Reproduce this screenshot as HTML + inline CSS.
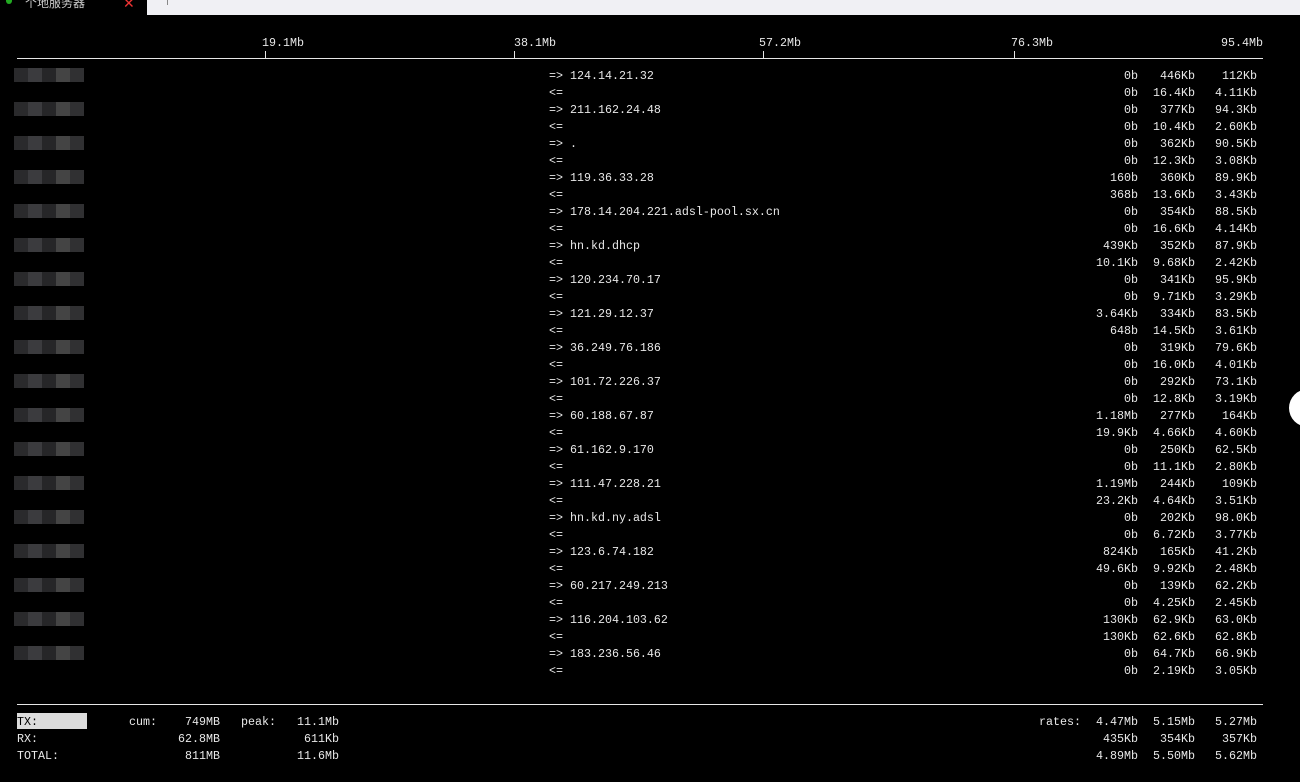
<!DOCTYPE html>
<html><head><meta charset="utf-8"><style>
*{margin:0;padding:0}
body{width:1300px;height:782px;background:#000;position:relative;overflow:hidden;font-family:"Liberation Mono",monospace;font-size:11.67px;color:#e8e8e8}
.r{position:absolute;left:0;width:1300px;height:17px;line-height:17px;white-space:pre;margin-top:1px}
.a{position:absolute;left:549px}
.c1{position:absolute;right:162px}
.c2{position:absolute;right:105px}
.c3{position:absolute;right:43px}
.tb{position:absolute;top:0;left:147px;width:1153px;height:15px;background:#f0f0f4}
.hl{position:absolute;height:1px;background:#e6e6e6}
.tk{position:absolute;width:1px;height:7px;background:#e6e6e6;top:51px}
.lb{position:absolute;top:35px;line-height:17px}
.bl{position:absolute;left:14px;width:70px;height:14px;background:linear-gradient(90deg,#2a2a2c 0 20%,#3b3b3e 20% 40%,#262628 40% 60%,#444 60% 80%,#303032 80%)}
</style></head><body>
<div class="tb"></div>
<div style="position:absolute;left:6px;top:0;width:6px;height:4px;background:#2a2;border-radius:0 0 3px 3px"></div>
<div style="position:absolute;left:25px;top:-6px;font-size:12px;color:#ccc;font-family:'Liberation Sans','Noto Sans CJK SC',sans-serif">个地服务器</div>
<div style="position:absolute;left:123px;top:-5px;color:#e33;font-size:14px;font-family:'Liberation Sans',sans-serif">✕</div>
<div style="position:absolute;left:167px;top:0;width:1px;height:5px;background:#888"></div>
<div class="hl" style="left:17px;top:58px;width:1246px"></div>
<div class="tk" style="left:265px"></div><div class="tk" style="left:514px"></div><div class="tk" style="left:763px"></div><div class="tk" style="left:1014px"></div>
<div class="lb" style="left:262px">19.1Mb</div><div class="lb" style="left:514px">38.1Mb</div><div class="lb" style="left:759px">57.2Mb</div><div class="lb" style="left:1011px">76.3Mb</div><div class="lb" style="left:1221px">95.4Mb</div>
<div class="bl" style="top:68px"></div><div class="bl" style="top:102px"></div><div class="bl" style="top:136px"></div><div class="bl" style="top:170px"></div><div class="bl" style="top:204px"></div><div class="bl" style="top:238px"></div><div class="bl" style="top:272px"></div><div class="bl" style="top:306px"></div><div class="bl" style="top:340px"></div><div class="bl" style="top:374px"></div><div class="bl" style="top:408px"></div><div class="bl" style="top:442px"></div><div class="bl" style="top:476px"></div><div class="bl" style="top:510px"></div><div class="bl" style="top:544px"></div><div class="bl" style="top:578px"></div><div class="bl" style="top:612px"></div><div class="bl" style="top:646px"></div>
<div class="r" style="top:67px"><span class="a">=> 124.14.21.32</span><span class="c1">0b</span><span class="c2">446Kb</span><span class="c3">112Kb</span></div>
<div class="r" style="top:84px"><span class="a">&lt;=</span><span class="c1">0b</span><span class="c2">16.4Kb</span><span class="c3">4.11Kb</span></div>
<div class="r" style="top:101px"><span class="a">=> 211.162.24.48</span><span class="c1">0b</span><span class="c2">377Kb</span><span class="c3">94.3Kb</span></div>
<div class="r" style="top:118px"><span class="a">&lt;=</span><span class="c1">0b</span><span class="c2">10.4Kb</span><span class="c3">2.60Kb</span></div>
<div class="r" style="top:135px"><span class="a">=> .</span><span class="c1">0b</span><span class="c2">362Kb</span><span class="c3">90.5Kb</span></div>
<div class="r" style="top:152px"><span class="a">&lt;=</span><span class="c1">0b</span><span class="c2">12.3Kb</span><span class="c3">3.08Kb</span></div>
<div class="r" style="top:169px"><span class="a">=> 119.36.33.28</span><span class="c1">160b</span><span class="c2">360Kb</span><span class="c3">89.9Kb</span></div>
<div class="r" style="top:186px"><span class="a">&lt;=</span><span class="c1">368b</span><span class="c2">13.6Kb</span><span class="c3">3.43Kb</span></div>
<div class="r" style="top:203px"><span class="a">=> 178.14.204.221.adsl-pool.sx.cn</span><span class="c1">0b</span><span class="c2">354Kb</span><span class="c3">88.5Kb</span></div>
<div class="r" style="top:220px"><span class="a">&lt;=</span><span class="c1">0b</span><span class="c2">16.6Kb</span><span class="c3">4.14Kb</span></div>
<div class="r" style="top:237px"><span class="a">=> hn.kd.dhcp</span><span class="c1">439Kb</span><span class="c2">352Kb</span><span class="c3">87.9Kb</span></div>
<div class="r" style="top:254px"><span class="a">&lt;=</span><span class="c1">10.1Kb</span><span class="c2">9.68Kb</span><span class="c3">2.42Kb</span></div>
<div class="r" style="top:271px"><span class="a">=> 120.234.70.17</span><span class="c1">0b</span><span class="c2">341Kb</span><span class="c3">95.9Kb</span></div>
<div class="r" style="top:288px"><span class="a">&lt;=</span><span class="c1">0b</span><span class="c2">9.71Kb</span><span class="c3">3.29Kb</span></div>
<div class="r" style="top:305px"><span class="a">=> 121.29.12.37</span><span class="c1">3.64Kb</span><span class="c2">334Kb</span><span class="c3">83.5Kb</span></div>
<div class="r" style="top:322px"><span class="a">&lt;=</span><span class="c1">648b</span><span class="c2">14.5Kb</span><span class="c3">3.61Kb</span></div>
<div class="r" style="top:339px"><span class="a">=> 36.249.76.186</span><span class="c1">0b</span><span class="c2">319Kb</span><span class="c3">79.6Kb</span></div>
<div class="r" style="top:356px"><span class="a">&lt;=</span><span class="c1">0b</span><span class="c2">16.0Kb</span><span class="c3">4.01Kb</span></div>
<div class="r" style="top:373px"><span class="a">=> 101.72.226.37</span><span class="c1">0b</span><span class="c2">292Kb</span><span class="c3">73.1Kb</span></div>
<div class="r" style="top:390px"><span class="a">&lt;=</span><span class="c1">0b</span><span class="c2">12.8Kb</span><span class="c3">3.19Kb</span></div>
<div class="r" style="top:407px"><span class="a">=> 60.188.67.87</span><span class="c1">1.18Mb</span><span class="c2">277Kb</span><span class="c3">164Kb</span></div>
<div class="r" style="top:424px"><span class="a">&lt;=</span><span class="c1">19.9Kb</span><span class="c2">4.66Kb</span><span class="c3">4.60Kb</span></div>
<div class="r" style="top:441px"><span class="a">=> 61.162.9.170</span><span class="c1">0b</span><span class="c2">250Kb</span><span class="c3">62.5Kb</span></div>
<div class="r" style="top:458px"><span class="a">&lt;=</span><span class="c1">0b</span><span class="c2">11.1Kb</span><span class="c3">2.80Kb</span></div>
<div class="r" style="top:475px"><span class="a">=> 111.47.228.21</span><span class="c1">1.19Mb</span><span class="c2">244Kb</span><span class="c3">109Kb</span></div>
<div class="r" style="top:492px"><span class="a">&lt;=</span><span class="c1">23.2Kb</span><span class="c2">4.64Kb</span><span class="c3">3.51Kb</span></div>
<div class="r" style="top:509px"><span class="a">=> hn.kd.ny.adsl</span><span class="c1">0b</span><span class="c2">202Kb</span><span class="c3">98.0Kb</span></div>
<div class="r" style="top:526px"><span class="a">&lt;=</span><span class="c1">0b</span><span class="c2">6.72Kb</span><span class="c3">3.77Kb</span></div>
<div class="r" style="top:543px"><span class="a">=> 123.6.74.182</span><span class="c1">824Kb</span><span class="c2">165Kb</span><span class="c3">41.2Kb</span></div>
<div class="r" style="top:560px"><span class="a">&lt;=</span><span class="c1">49.6Kb</span><span class="c2">9.92Kb</span><span class="c3">2.48Kb</span></div>
<div class="r" style="top:577px"><span class="a">=> 60.217.249.213</span><span class="c1">0b</span><span class="c2">139Kb</span><span class="c3">62.2Kb</span></div>
<div class="r" style="top:594px"><span class="a">&lt;=</span><span class="c1">0b</span><span class="c2">4.25Kb</span><span class="c3">2.45Kb</span></div>
<div class="r" style="top:611px"><span class="a">=> 116.204.103.62</span><span class="c1">130Kb</span><span class="c2">62.9Kb</span><span class="c3">63.0Kb</span></div>
<div class="r" style="top:628px"><span class="a">&lt;=</span><span class="c1">130Kb</span><span class="c2">62.6Kb</span><span class="c3">62.8Kb</span></div>
<div class="r" style="top:645px"><span class="a">=> 183.236.56.46</span><span class="c1">0b</span><span class="c2">64.7Kb</span><span class="c3">66.9Kb</span></div>
<div class="r" style="top:662px"><span class="a">&lt;=</span><span class="c1">0b</span><span class="c2">2.19Kb</span><span class="c3">3.05Kb</span></div>
<div class="hl" style="left:17px;top:704px;width:1246px"></div>
<div style="position:absolute;left:17px;top:713px;width:70px;height:16px;background:#dcdcdc"></div>
<div class="r" style="top:713px"><span style="position:absolute;left:17px;color:#000">TX:</span><span style="position:absolute;left:129px">cum:</span><span style="position:absolute;right:1080px">749MB</span><span style="position:absolute;left:241px">peak:</span><span style="position:absolute;right:961px">11.1Mb</span><span style="position:absolute;left:1039px">rates:</span><span class="c1">4.47Mb</span><span class="c2">5.15Mb</span><span class="c3">5.27Mb</span></div>
<div class="r" style="top:730px"><span style="position:absolute;left:17px">RX:</span><span style="position:absolute;right:1080px">62.8MB</span><span style="position:absolute;right:961px">611Kb</span><span class="c1">435Kb</span><span class="c2">354Kb</span><span class="c3">357Kb</span></div>
<div class="r" style="top:747px"><span style="position:absolute;left:17px">TOTAL:</span><span style="position:absolute;right:1080px">811MB</span><span style="position:absolute;right:961px">11.6Mb</span><span class="c1">4.89Mb</span><span class="c2">5.50Mb</span><span class="c3">5.62Mb</span></div>
<div style="position:absolute;left:1289px;top:389px;width:38px;height:38px;border-radius:50%;background:#fff"></div>
</body></html>
